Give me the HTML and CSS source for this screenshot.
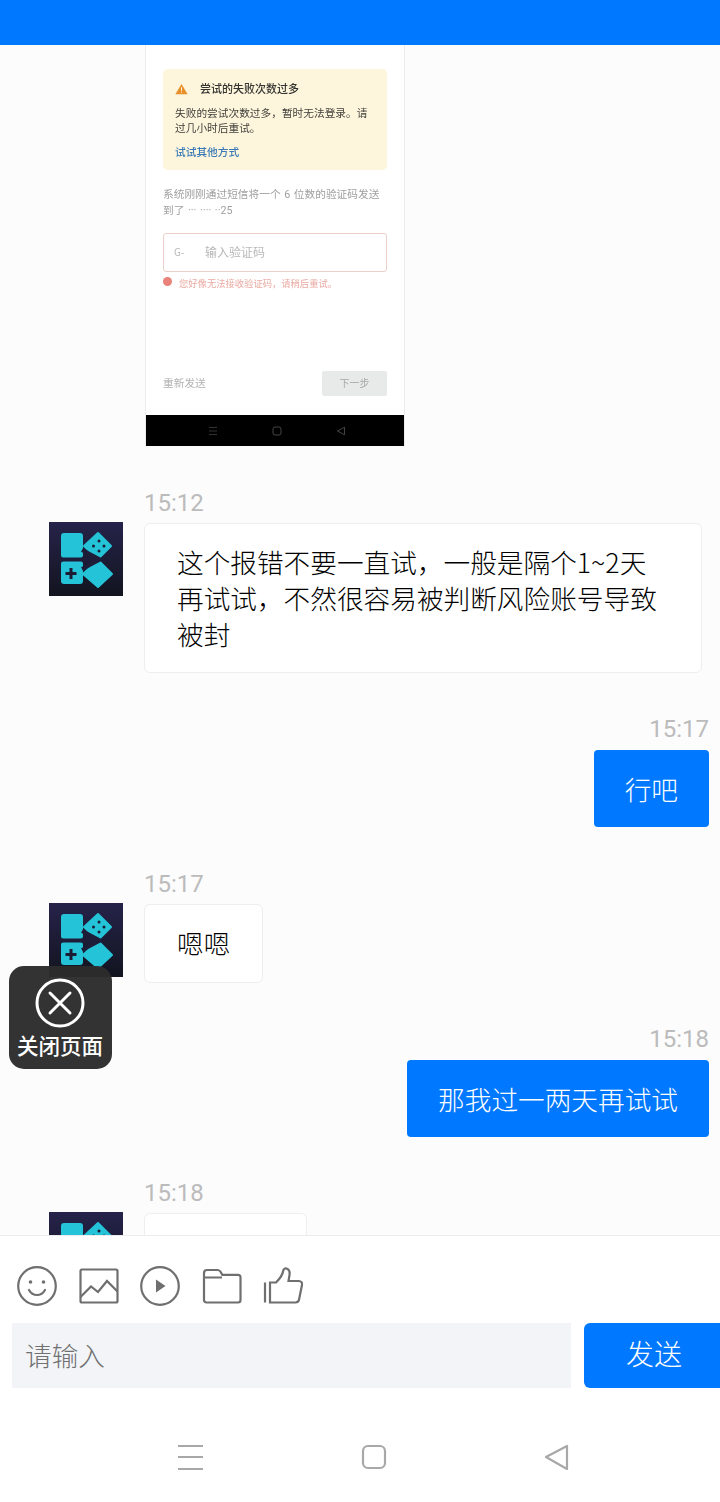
FILE: index.html
```html
<!DOCTYPE html>
<html lang="zh">
<head>
<meta charset="utf-8">
<title>聊天</title>
<link rel="stylesheet" href="styles.css">
</head>
<body>
<div class="app">
  <header class="topbar"></header>
  <main class="chat">
    <div class="shot">
      <div class="shot-body">
        <div class="alert">
          <div class="alert-title">
            <svg class="alert-icon" viewBox="0 0 14 12"><path d="M7 .5 13.6 11.6H.4Z" fill="#e8902a"/><path d="M7 4.2v3.6M7 9v1" stroke="#fdf5dc" stroke-width="1.1"/></svg>
            <span>尝试的失败次数过多</span>
          </div>
          <p class="alert-text">失败的尝试次数过多，暂时无法登录。请过几小时后重试。</p>
          <p class="alert-link">试试其他方式</p>
        </div>
        <p class="hint">系统刚刚通过短信将一个 6 位数的验证码发送到了 ··· ···· ··25</p>
        <div class="code-input"><span class="code-prefix">G-</span><span>输入验证码</span></div>
        <div class="code-error"><i class="err-dot"></i><span>您好像无法接收验证码，请稍后重试。</span></div>
        <div class="shot-actions"><span>重新发送</span><span class="next-btn">下一步</span></div>
      </div>
      <div class="shot-nav">
        <svg width="10" height="10" viewBox="0 0 10 10"><path d="M1 1.5h8M1 5h8M1 8.500h8" stroke="#333" stroke-width="1"/></svg>
        <svg width="10" height="10" viewBox="0 0 10 10"><rect x="1" y="1" width="8" height="8" rx="2" fill="none" stroke="#444"/></svg>
        <svg width="10" height="10" viewBox="0 0 10 10"><path d="M1.500 5 8.500 1.200V8.800Z" fill="none" stroke="#444"/></svg>
      </div>
    </div>

    <section class="msg msg-left msg-first">
      <time class="stamp">15:12</time>
      <div class="row">
        <svg class="avatar" viewBox="0 0 74 74"><use href="#logo"/></svg>
        <div class="bubble">这个报错不要一直试，一般是隔个1~2天再试试，不然很容易被判断风险账号导致被封</div>
      </div>
    </section>

    <section class="msg msg-right">
      <time class="stamp">15:17</time>
      <div class="bubble bubble-me">行吧</div>
    </section>

    <section class="msg msg-left">
      <time class="stamp">15:17</time>
      <div class="row">
        <svg class="avatar" viewBox="0 0 74 74"><use href="#logo"/></svg>
        <div class="bubble">嗯嗯</div>
      </div>
    </section>

    <section class="msg msg-right">
      <time class="stamp">15:18</time>
      <div class="bubble bubble-me">那我过一两天再试试</div>
    </section>

    <section class="msg msg-left msg-tail">
      <time class="stamp">15:18</time>
      <div class="row">
        <svg class="avatar" viewBox="0 0 74 74"><use href="#logo"/></svg>
        <div class="bubble bubble-last"></div>
      </div>
    </section>
  </main>

  <button class="close-page">
    <svg class="close-icon" viewBox="0 0 50 50"><circle cx="25" cy="25" r="23" fill="none" stroke="#fff" stroke-width="3"/><path d="M15 15 35 35M35 15 15 35" stroke="#fff" stroke-width="3" stroke-linecap="round"/></svg>
    <span>关闭页面</span>
  </button>

  <footer class="composer">
    <div class="tools">
      <svg class="tool" viewBox="0 0 40 40"><circle cx="20" cy="20" r="18.800"/><circle class="solid" cx="13.500" cy="16" r="1.800"/><circle class="solid" cx="26.500" cy="16" r="1.800"/><path d="M12 24c2 3.600 5 5 8 5s6-1.400 8-5" stroke-linecap="round"/></svg>
      <svg class="tool" viewBox="0 0 40 40"><rect x="1.500" y="3.500" width="37" height="33" rx="1.500"/><path d="M1.500 31 12 20.500l7 5.500 9-11 10.500 10.500"/></svg>
      <svg class="tool" viewBox="0 0 40 40"><circle cx="20" cy="20" r="18.800"/><path class="solid" d="M16 13.500 25.500 20 16 26.500Z"/></svg>
      <svg class="tool" viewBox="0 0 40 40"><path d="M2 7c0-2 1-3 3-3h10.500c1.500 0 2.500 .6 3.200 2l1.600 2.800H36c1.500 0 2.500 1 2.500 2.500V34c0 1.500-1 2.500-2.500 2.500H4.500C3 36.500 2 35.500 2 34ZM2 11.500h18"/></svg>
      <svg class="tool" viewBox="0 0 40 40"><path d="M2 16.500V36.500M7 16.500h6c3-3 6.500-7 7-11 .3-2.500 2-3.500 3.500-3 2.500 .8 3.500 3.500 3 6.500L25.500 15H36c2 0 3.500 1.800 3 3.800l-3 15c-.4 1.800-1.700 2.700-3.500 2.700H7Z"/></svg>
    </div>
    <div class="entry">
      <div class="entry-field">请输入</div>
      <button class="send">发送</button>
    </div>
  </footer>

  <nav class="sysnav">
    <svg class="nav-icon" viewBox="0 0 26 26"><path d="M0 2h25M0 13h25M0 25h25"/></svg>
    <svg class="nav-icon" viewBox="0 0 26 26"><rect x="2" y="2" width="22" height="22" rx="5"/></svg>
    <svg class="nav-icon" viewBox="0 0 26 26"><path d="M2 13 23 2V25Z" stroke-linejoin="round"/></svg>
  </nav>
</div>

<svg class="defs" width="0" height="0">
  <defs>
    <linearGradient id="navy" x1="0" y1="0" x2="0" y2="1"><stop offset="0" stop-color="#25234a"/><stop offset="1" stop-color="#12141f"/></linearGradient>
    <g id="logo">
      <rect width="74" height="74" fill="url(#navy)"/>
      <rect x="12" y="11" width="22" height="25" rx="3" fill="#25c3d8"/>
      <rect x="12" y="39" width="22" height="23" rx="3" fill="#25c3d8"/>
      <path d="M49 11 62 24 49 37 35 24Z" fill="#25c3d8" stroke="#25c3d8" stroke-width="2" stroke-linejoin="round"/>
      <path d="M49 38 63 52 49 65 34 52Z" fill="#25c3d8" stroke="#25c3d8" stroke-width="2" stroke-linejoin="round"/>
      <path d="M22 46v11M16.500 51.500h11" stroke="#1b1c33" stroke-width="3"/>
      <g fill="#1b1c33"><circle cx="50" cy="19" r="1.500"/><circle cx="44.500" cy="24" r="1.500"/><circle cx="55" cy="24" r="1.500"/><circle cx="50" cy="29" r="1.500"/></g>
      <path d="M10 37.500H49M33 28 51 37.500 33 47" fill="none" stroke="#1e1d39" stroke-width="4"/>
    </g>
  </defs>
</svg>
</body>
</html>
```

FILE: styles.css
```css
* { box-sizing: border-box; }
html, body { margin: 0; padding: 0; }
body {
  background: #fff;
  font-family: "Noto Sans CJK SC", "Noto Sans", sans-serif;
}
p { margin: 0; }
.defs { position: absolute; }
.app {
  position: relative;
  width: 720px;
  height: 1502px;
  overflow: hidden;
  background: #fff;
}
.topbar { height: 45px; background: #0078ff; }

.chat {
  height: 1191px;
  overflow: hidden;
  background: #fcfcfd;
  border-bottom: 1px solid #ececee;
}

/* embedded screenshot */
.shot {
  width: 260px;
  height: 401px;
  margin-left: 145px;
  display: flex;
  flex-direction: column;
  background: #fff;
  border: solid #ececec;
  border-width: 0 1px;
  filter: blur(.5px);
}
.shot-body {
  flex: 1;
  padding: 24px 17px 0;
  display: flex;
  flex-direction: column;
}
.alert {
  height: 101px;
  padding: 12px 12px 0;
  background: #fdf5dc;
  border-radius: 5px;
  font-size: 10.7px;
  line-height: 15px;
  color: #403f3a;
}
.alert-title {
  display: flex;
  align-items: center;
  gap: 12px;
  font-size: 11px;
  font-weight: 500;
  color: #33332f;
}
.alert-icon { width: 13px; height: 12px; }
.alert-text { margin-top: 9px; }
.alert-link { margin-top: 9px; color: #3a7ab8; font-weight: 500; }
.hint {
  margin-top: 17px;
  font-family: Roboto, "Noto Sans CJK SC", sans-serif;
  font-size: 10.7px;
  line-height: 16px;
  word-spacing: 1px;
  color: #a0a0a0;
}
.code-input {
  margin-top: 14px;
  height: 39px;
  padding-bottom: 3px;
  display: flex;
  align-items: center;
  border: 1.500px solid #eccfc8;
  border-radius: 3px;
  font-size: 12px;
  color: #b8b8b8;
}
.code-prefix { width: 41px; padding-left: 10px; font-size: 10px; }
.code-error {
  margin-top: 4px;
  display: flex;
  align-items: center;
  gap: 7px;
  font-size: 9.300px;
  line-height: 14px;
  color: #eaaaa2;
}
.err-dot { width: 9px; height: 9px; border-radius: 50%; background: #e9827a; margin-top: -3px; }
.shot-actions {
  margin-top: 81px;
  display: flex;
  align-items: center;
  justify-content: space-between;
  font-size: 10.700px;
  color: #b2b2b2;
}
.shot-actions > span:first-child { margin-top: -2px; }
.next-btn {
  width: 65px;
  height: 25px;
  padding-bottom: 2px;
  display: flex;
  align-items: center;
  justify-content: center;
  background: #e8eaea;
  border-radius: 2px;
  font-size: 10px;
  color: #a8a8a8;
}
.shot-nav {
  height: 31px;
  flex: none;
  display: flex;
  align-items: center;
  justify-content: center;
  gap: 54px;
  padding-left: 4px;
  background: #000;
}

/* messages */
.msg { display: flex; flex-direction: column; }
.msg-left { padding-left: 49px; margin-top: 43px; }
.msg-tail { margin-top: 42px; }
.msg-right { align-items: flex-end; padding-right: 11px; margin-top: 42px; }
.stamp {
  font-family: Roboto, "Liberation Sans", sans-serif;
  font-size: 24px;
  line-height: 28px;
  color: #bbbbbb;
}
.msg-left .stamp { margin-left: 95px; }
.msg-right .stamp { margin-bottom: 7px; }
.row { display: flex; align-items: flex-start; gap: 21px; margin-top: 6px; }
.avatar { width: 74px; height: 74px; flex: none; margin-top: -1px; }
.bubble {
  width: fit-content;
  min-height: 79px;
  max-width: 558px;
  padding: 20px 32px;
  background: #fff;
  border: 1px solid #eeeeef;
  border-radius: 6px;
  font-size: 26.670px;
  font-weight: 300;
  line-height: 36px;
  color: #000;
}
.bubble-me {
  min-height: 0;
  border: 0;
  padding: 21px 31px;
  background: #0078ff;
  color: #fff;
  border-radius: 4px;
  line-height: 35px;
}
.bubble-last { width: 163px; height: 80px; }

/* floating button */
.close-page {
  position: absolute;
  left: 9px;
  top: 966px;
  width: 103px;
  height: 103px;
  padding: 12px 1px 0 0;
  display: flex;
  flex-direction: column;
  align-items: center;
  gap: 2px;
  border: 0;
  border-radius: 15px;
  background: rgba(44, 44, 44, .97);
  color: #fff;
  font-family: inherit;
  font-size: 21.500px;
  line-height: 29px;
  font-weight: 500;
}
.close-icon { width: 50px; height: 50px; }

/* composer */
.composer { padding-top: 30px; }
.tools { display: flex; gap: 21.500px; padding-left: 17px; }
.tool {
  width: 40px;
  height: 40px;
  fill: none;
  stroke: #6f6f6f;
  stroke-width: 2.200;
}
.tool .solid { fill: #6f6f6f; stroke: none; }
.entry {
  display: flex;
  gap: 13px;
  margin-top: 17px;
  padding-left: 12px;
}
.entry-field {
  width: 559px;
  height: 65px;
  padding: 0 0 3px 13px;
  display: flex;
  align-items: center;
  background: #f2f4f8;
  font-size: 26.670px;
  font-weight: 300;
  color: #707070;
}
.send {
  width: 136px;
  height: 65px;
  border: 0;
  padding: 0 0 5px 4px;
  border-radius: 6px 0 0 6px;
  background: #0078ff;
  color: #fff;
  font-family: inherit;
  font-size: 28px;
  font-weight: 300;
}

/* system navigation */
.sysnav {
  display: flex;
  gap: 157px;
  padding: 56px 0 0 178px;
}
.nav-icon {
  width: 26px;
  height: 26px;
  fill: none;
  stroke: #a8a8a8;
  stroke-width: 2.200;
}
```
